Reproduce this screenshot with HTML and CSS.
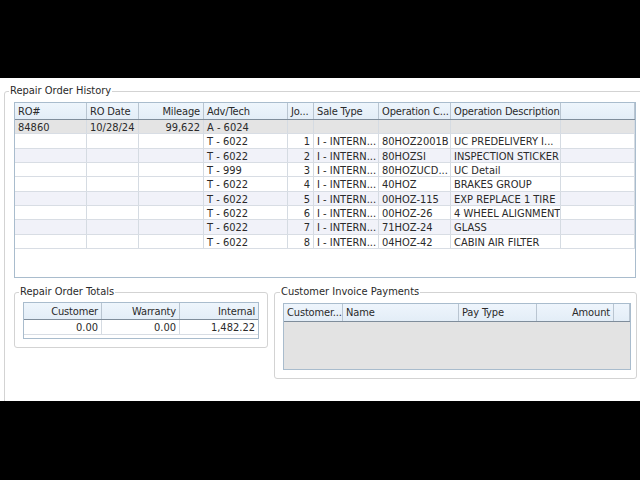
FILE: index.html
```html
<!DOCTYPE html>
<html>
<head>
<meta charset="utf-8">
<link rel="stylesheet" href="styles.css">
</head>
<body>
<div class="screen">
  <div class="panel">
    <fieldset class="group history">
      <legend>Repair Order History</legend>
      <div class="grid hist">
        <div class="row head">
          <div class="c">RO#</div><div class="c">RO Date</div><div class="c r">Mileage</div><div class="c">Adv/Tech</div><div class="c">Jo...</div><div class="c">Sale Type</div><div class="c">Operation C...</div><div class="c">Operation Description</div><div class="c"></div>
        </div>
        <div class="row sel">
          <div class="c">84860</div><div class="c">10/28/24</div><div class="c r">99,622</div><div class="c">A - 6024</div><div class="c"></div><div class="c"></div><div class="c"></div><div class="c"></div><div class="c"></div>
        </div>
        <div class="row">
          <div class="c"></div><div class="c"></div><div class="c"></div><div class="c">T - 6022</div><div class="c r">1</div><div class="c">I - INTERN...</div><div class="c">80HOZ2001B</div><div class="c">UC PREDELIVERY I...</div><div class="c"></div>
        </div>
        <div class="row alt">
          <div class="c"></div><div class="c"></div><div class="c"></div><div class="c">T - 6022</div><div class="c r">2</div><div class="c">I - INTERN...</div><div class="c">80HOZSI</div><div class="c">INSPECTION STICKER</div><div class="c"></div>
        </div>
        <div class="row">
          <div class="c"></div><div class="c"></div><div class="c"></div><div class="c">T - 999</div><div class="c r">3</div><div class="c">I - INTERN...</div><div class="c">80HOZUCD...</div><div class="c">UC Detail</div><div class="c"></div>
        </div>
        <div class="row">
          <div class="c"></div><div class="c"></div><div class="c"></div><div class="c">T - 6022</div><div class="c r">4</div><div class="c">I - INTERN...</div><div class="c">40HOZ</div><div class="c">BRAKES GROUP</div><div class="c"></div>
        </div>
        <div class="row alt">
          <div class="c"></div><div class="c"></div><div class="c"></div><div class="c">T - 6022</div><div class="c r">5</div><div class="c">I - INTERN...</div><div class="c">00HOZ-115</div><div class="c">EXP REPLACE 1 TIRE</div><div class="c"></div>
        </div>
        <div class="row">
          <div class="c"></div><div class="c"></div><div class="c"></div><div class="c">T - 6022</div><div class="c r">6</div><div class="c">I - INTERN...</div><div class="c">00HOZ-26</div><div class="c">4 WHEEL ALIGNMENT</div><div class="c"></div>
        </div>
        <div class="row alt">
          <div class="c"></div><div class="c"></div><div class="c"></div><div class="c">T - 6022</div><div class="c r">7</div><div class="c">I - INTERN...</div><div class="c">71HOZ-24</div><div class="c">GLASS</div><div class="c"></div>
        </div>
        <div class="row">
          <div class="c"></div><div class="c"></div><div class="c"></div><div class="c">T - 6022</div><div class="c r">8</div><div class="c">I - INTERN...</div><div class="c">04HOZ-42</div><div class="c">CABIN AIR FILTER</div><div class="c"></div>
        </div>
      </div>

      <div class="bottom">
        <fieldset class="group totals">
          <legend>Repair Order Totals</legend>
          <div class="grid tot">
            <div class="row head">
              <div class="c r">Customer</div><div class="c r">Warranty</div><div class="c r">Internal</div>
            </div>
            <div class="row">
              <div class="c r">0.00</div><div class="c r">0.00</div><div class="c r">1,482.22</div>
            </div>
          </div>
        </fieldset>
        <fieldset class="group payments">
          <legend>Customer Invoice Payments</legend>
          <div class="grid pay">
            <div class="row head">
              <div class="c">Customer...</div><div class="c">Name</div><div class="c">Pay Type</div><div class="c r">Amount</div><div class="c"></div>
            </div>
          </div>
        </fieldset>
      </div>
    </fieldset>
  </div>
</div>
</body>
</html>
```

FILE: styles.css
```css
* { box-sizing: border-box; }
html, body { margin: 0; padding: 0; background: #000; }
body {
  font-family: "DejaVu Sans Condensed", "DejaVu Sans", sans-serif;
  font-stretch: condensed;
  font-size: 11px;
  color: #2a2a2a;
}
.screen {
  width: 640px;
  height: 480px;
  padding-top: 78px;
  overflow: hidden;
}
.panel {
  background: #fff;
  height: 323px;
  overflow: hidden;
  padding: 0 0 0 4px;
}
.group {
  margin: 0;
  border: 1px solid #d3d3d3;
  border-radius: 3px;
  padding: 0;
  min-width: 0;
}
.group legend {
  font-size: 11px;
  line-height: 14px;
  padding: 0 1px;
  color: #2a2a2a;
}
.history {
  width: 660px;
  height: 340px;
  margin-top: 6px;
  padding: 4px 0 0 9px;
}
.history > legend { margin-left: -5px; }
.grid {
  border: 1px solid #a9bccd;
  background: #fff;
}
.row {
  display: grid;
  height: 14.33px;
  border-bottom: 1px solid #d8dde4;
}
.row .c {
  border-right: 1px solid #d5dbe2;
  padding: 1px 3px 0;
  line-height: 13.33px;
  white-space: nowrap;
  overflow: hidden;
}
.row .c.r { text-align: right; padding-right: 3px; }
.row.head {
  height: 17px;
  background: linear-gradient(#eef5fc, #e3edf7);
  border-bottom: 1px solid #7f8d9b;
  letter-spacing: -0.15px;
}
.row.head .c { border-right-color: #b9c5d1; line-height: 16px; }
.row.sel { background: #e4e4e4; }
.row.alt { background: #f1f2f9; }

.hist { width: 622px; height: 176px; }
.hist .row { grid-template-columns: 72px 52px 65px 84px 26px 65px 72px 110px 74px; }

.bottom {
  display: flex;
  align-items: flex-start;
  gap: 6px;
  margin-top: 7px;
}
.totals {
  width: 254px;
  padding: 3px 8px 8px 8px;
}
.totals > legend { margin-left: -4px; }
.tot { width: 236px; height: 37px; }
.tot .row { grid-template-columns: 78px 78px 78px; }
.tot .row .c:last-child { border-right: 0; }
.tot .row.head { height: 17px; }
.tot .row:not(.head) { height: 15px; }

.payments {
  width: 363px;
  height: 94px;
  padding: 4px 5px 0 8px;
}
.payments > legend { margin-left: -3px; }
.pay {
  width: 348px;
  height: 67px;
  background: #e3e3e3;
}
.pay .row { grid-template-columns: 59px 116px 78px 77px 16px; }
.pay .row.head { height: 18px; line-height: 17px; }
```
